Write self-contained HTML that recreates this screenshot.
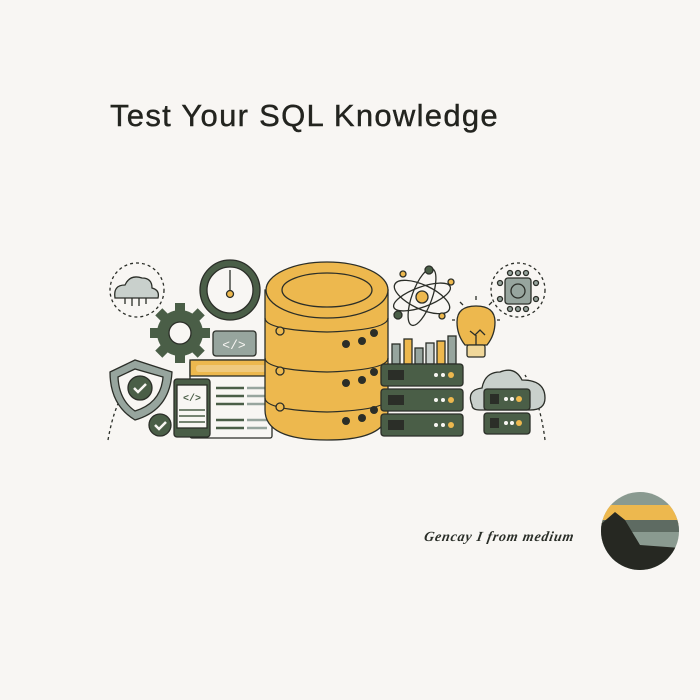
<!DOCTYPE html>
<html><head><meta charset="utf-8"><style>
html,body{margin:0;padding:0;}
body{width:700px;height:700px;background:#f8f6f3;position:relative;overflow:hidden;font-family:"Liberation Sans",sans-serif;}
.t{position:absolute;left:110px;top:98px;font-size:31px;color:#23241f;letter-spacing:1.3px;white-space:nowrap;-webkit-text-stroke:0.4px #23241f;}
.g{position:absolute;left:424px;top:530px;font-family:"Liberation Serif",serif;font-style:italic;font-weight:bold;font-size:14px;color:#2a2e28;letter-spacing:0.8px;transform:skewX(-10deg);}
</style></head><body>
<div class="t">Test Your SQL Knowledge</div>
<svg width="700" height="700" style="position:absolute;left:0;top:0" xmlns="http://www.w3.org/2000/svg">
<g stroke="#2b2e28" stroke-width="1.3">
<circle cx="137" cy="290" r="27" fill="none" stroke-dasharray="3 3"/>
<circle cx="518" cy="290" r="27" fill="none" stroke-dasharray="3 3"/>
<path d="M108 440 Q115 400 130 385" fill="none" stroke-dasharray="3 3"/>
<path d="M545 440 Q540 400 525 375" fill="none" stroke-dasharray="3 3"/>
<path d="M115 298 Q113 285 125 285 Q130 274 142 278 Q152 278 152 288 Q160 290 158 298 Z" fill="#c9d0cc"/>
<path d="M125 298v6M132 298v8M139 298v8M146 298v6" fill="none"/>
<circle cx="230" cy="290" r="30" fill="#4a5e47"/>
<circle cx="230" cy="290" r="23" fill="#f8f6f3"/>
<path d="M230 270v20" fill="none"/>
<circle cx="230" cy="294" r="3.5" fill="#edb84e"/>
<g fill="#4a5e47" stroke="none">
<circle cx="180" cy="333" r="23"/>
<rect x="175" y="303" width="10" height="60"/>
<rect x="150" y="328" width="60" height="10"/>
<rect x="175" y="303" width="10" height="60" transform="rotate(45 180 333)"/>
<rect x="175" y="303" width="10" height="60" transform="rotate(-45 180 333)"/>
</g>
<circle cx="180" cy="333" r="11" fill="#f8f6f3"/>
<rect x="213" y="331" width="43" height="25" rx="3" fill="#97a59e"/>
<text x="234" y="349" font-size="13" text-anchor="middle" fill="#f8f6f3" stroke="none" font-family="Liberation Mono">&lt;/&gt;</text>
<path d="M110 372 L135 360 L172 372 Q170 410 135 420 Q110 405 110 372Z" fill="#97a59e"/>
<path d="M118 377 L135 369 L163 377 Q161 403 135 411 Q119 400 118 377Z" fill="#f8f6f3"/>
<circle cx="140" cy="388" r="12" fill="#4a5e47"/>
<path d="M134 388l4 4 8-8" stroke="#f8f6f3" stroke-width="2.5" fill="none"/>
<circle cx="160" cy="425" r="11" fill="#4a5e47"/>
<path d="M155 425l4 4 7-7" stroke="#f8f6f3" stroke-width="2.5" fill="none"/>
<rect x="190" y="360" width="82" height="78" rx="2" fill="#f8f6f3"/>
<rect x="190" y="360" width="82" height="16" fill="#edb84e"/>
<rect x="196" y="365" width="70" height="7" rx="3" fill="#f8f6f3" stroke="none" opacity=".3"/>
<path d="M216 388h28M216 396h28M216 404h28M216 420h28M216 428h28" stroke="#4a5e47" stroke-width="2.5"/>
<path d="M247 388h20M247 396h20M247 404h20M247 420h20M247 428h20" stroke="#97a59e" stroke-width="2.5"/>
<rect x="174" y="379" width="36" height="58" rx="3" fill="#4a5e47"/>
<rect x="177" y="385" width="30" height="43" fill="#f8f6f3"/>
<text x="192" y="401" font-size="10" text-anchor="middle" fill="#4a5e47" stroke="none" font-family="Liberation Mono" font-weight="bold">&lt;/&gt;</text>
<path d="M179 410h26M179 416h26M179 422h26" stroke="#4a5e47" stroke-width="1.5"/>
<path d="M265 290 V410 Q265 440 327 440 Q388 440 388 410 V290 Z" fill="#edb84e"/>
<ellipse cx="327" cy="290" rx="61" ry="28" fill="#edb84e"/>
<ellipse cx="327" cy="290" rx="45" ry="17" fill="#edb84e"/>
<path d="M265 318 Q265 330 327 332 Q388 330 388 318 M265 358 Q265 370 327 372 Q388 370 388 358 M265 398 Q265 410 327 412 Q388 410 388 398" fill="none"/>
<g fill="#2b2e28" stroke="none">
<circle cx="346" cy="344" r="4"/><circle cx="362" cy="341" r="4"/><circle cx="374" cy="333" r="4"/>
<circle cx="346" cy="383" r="4"/><circle cx="362" cy="380" r="4"/><circle cx="374" cy="372" r="4"/>
<circle cx="346" cy="421" r="4"/><circle cx="362" cy="418" r="4"/><circle cx="374" cy="410" r="4"/>
</g>
<circle cx="280" cy="331" r="4" fill="#edb84e"/><circle cx="280" cy="371" r="4" fill="#edb84e"/><circle cx="280" cy="407" r="4" fill="#edb84e"/>
<ellipse cx="422" cy="297" rx="30" ry="12" fill="none" transform="rotate(25 422 297)"/>
<ellipse cx="422" cy="297" rx="30" ry="10" fill="none" transform="rotate(-70 422 297)"/>
<ellipse cx="422" cy="297" rx="30" ry="10" fill="none" transform="rotate(-20 422 297)"/>
<circle cx="422" cy="297" r="6" fill="#edb84e"/>
<circle cx="429" cy="270" r="4" fill="#4a5e47"/><circle cx="398" cy="315" r="4" fill="#4a5e47"/>
<circle cx="403" cy="274" r="3" fill="#edb84e"/><circle cx="451" cy="282" r="3" fill="#edb84e"/><circle cx="442" cy="316" r="3" fill="#edb84e"/>
<rect x="392" y="344" width="8" height="20" fill="#97a59e"/>
<rect x="404" y="339" width="8" height="25" fill="#edb84e"/>
<rect x="415" y="348" width="8" height="16" fill="#97a59e"/>
<rect x="426" y="343" width="8" height="21" fill="#c9d0cc"/>
<rect x="437" y="341" width="8" height="23" fill="#edb84e"/>
<rect x="448" y="336" width="8" height="28" fill="#97a59e"/>
<rect x="381" y="364" width="82" height="22" rx="3" fill="#4a5e47"/>
<rect x="381" y="389" width="82" height="22" rx="3" fill="#4a5e47"/>
<rect x="381" y="414" width="82" height="22" rx="3" fill="#4a5e47"/>
<g stroke="none">
<g fill="#2b2e28"><rect x="388" y="370" width="16" height="10"/><rect x="388" y="395" width="16" height="10"/><rect x="388" y="420" width="16" height="10"/></g>
<g fill="#f8f6f3"><circle cx="436" cy="375" r="2"/><circle cx="443" cy="375" r="2"/><circle cx="436" cy="400" r="2"/><circle cx="443" cy="400" r="2"/><circle cx="436" cy="425" r="2"/><circle cx="443" cy="425" r="2"/></g>
<g fill="#edb84e"><circle cx="451" cy="375" r="3"/><circle cx="451" cy="400" r="3"/><circle cx="451" cy="425" r="3"/></g>
</g>
<path d="M465 345 Q457 335 457 322 Q457 306 476 306 Q495 306 495 322 Q495 335 487 345 Z" fill="#edb84e"/>
<path d="M470 331l5 4 5-5 5 5 M476 335v10" fill="none"/>
<rect x="467" y="345" width="18" height="12" rx="2" fill="#f0d79a"/>
<path d="M476 296v4M460 302l3 3M492 302l-3 3M452 320h3M500 320h-3" fill="none"/>
<rect x="505" y="278" width="26" height="26" rx="3" fill="#97a59e"/>
<circle cx="518" cy="291" r="7" fill="#97a59e"/>
<g fill="#97a59e"><circle cx="510" cy="273" r="2.5"/><circle cx="518" cy="273" r="2.5"/><circle cx="526" cy="273" r="2.5"/><circle cx="510" cy="309" r="2.5"/><circle cx="518" cy="309" r="2.5"/><circle cx="526" cy="309" r="2.5"/><circle cx="500" cy="283" r="2.5"/><circle cx="500" cy="299" r="2.5"/><circle cx="536" cy="283" r="2.5"/><circle cx="536" cy="299" r="2.5"/></g>
<path d="M472 405 Q466 390 482 388 Q485 372 500 372 Q515 366 522 380 Q545 380 545 398 Q545 410 530 410 H480 Q472 410 472 405Z" fill="#c9d0cc"/>
<rect x="484" y="389" width="46" height="21" rx="3" fill="#4a5e47"/>
<rect x="484" y="413" width="46" height="21" rx="3" fill="#4a5e47"/>
<g stroke="none"><rect x="490" y="394" width="9" height="10" fill="#2b2e28"/><rect x="490" y="418" width="9" height="10" fill="#2b2e28"/>
<circle cx="506" cy="399" r="2" fill="#f8f6f3"/><circle cx="512" cy="399" r="2" fill="#f8f6f3"/><circle cx="519" cy="399" r="3" fill="#edb84e"/>
<circle cx="506" cy="423" r="2" fill="#f8f6f3"/><circle cx="512" cy="423" r="2" fill="#f8f6f3"/><circle cx="519" cy="423" r="3" fill="#edb84e"/></g>
</g>
<defs><clipPath id="c"><circle cx="640" cy="531" r="39"/></clipPath></defs>
<g clip-path="url(#c)">
<rect x="600" y="490" width="80" height="82" fill="#8a9a90"/>
<rect x="600" y="505" width="80" height="20" fill="#edb84e"/>
<rect x="600" y="520" width="80" height="12" fill="#5e6b62"/>
<path d="M600 525 L615 512 L625 520 L640 545 L680 548 V575 H600Z" fill="#262822"/>
</g>
</svg>
<div class="g">Gencay I from medium</div>
</body></html>
